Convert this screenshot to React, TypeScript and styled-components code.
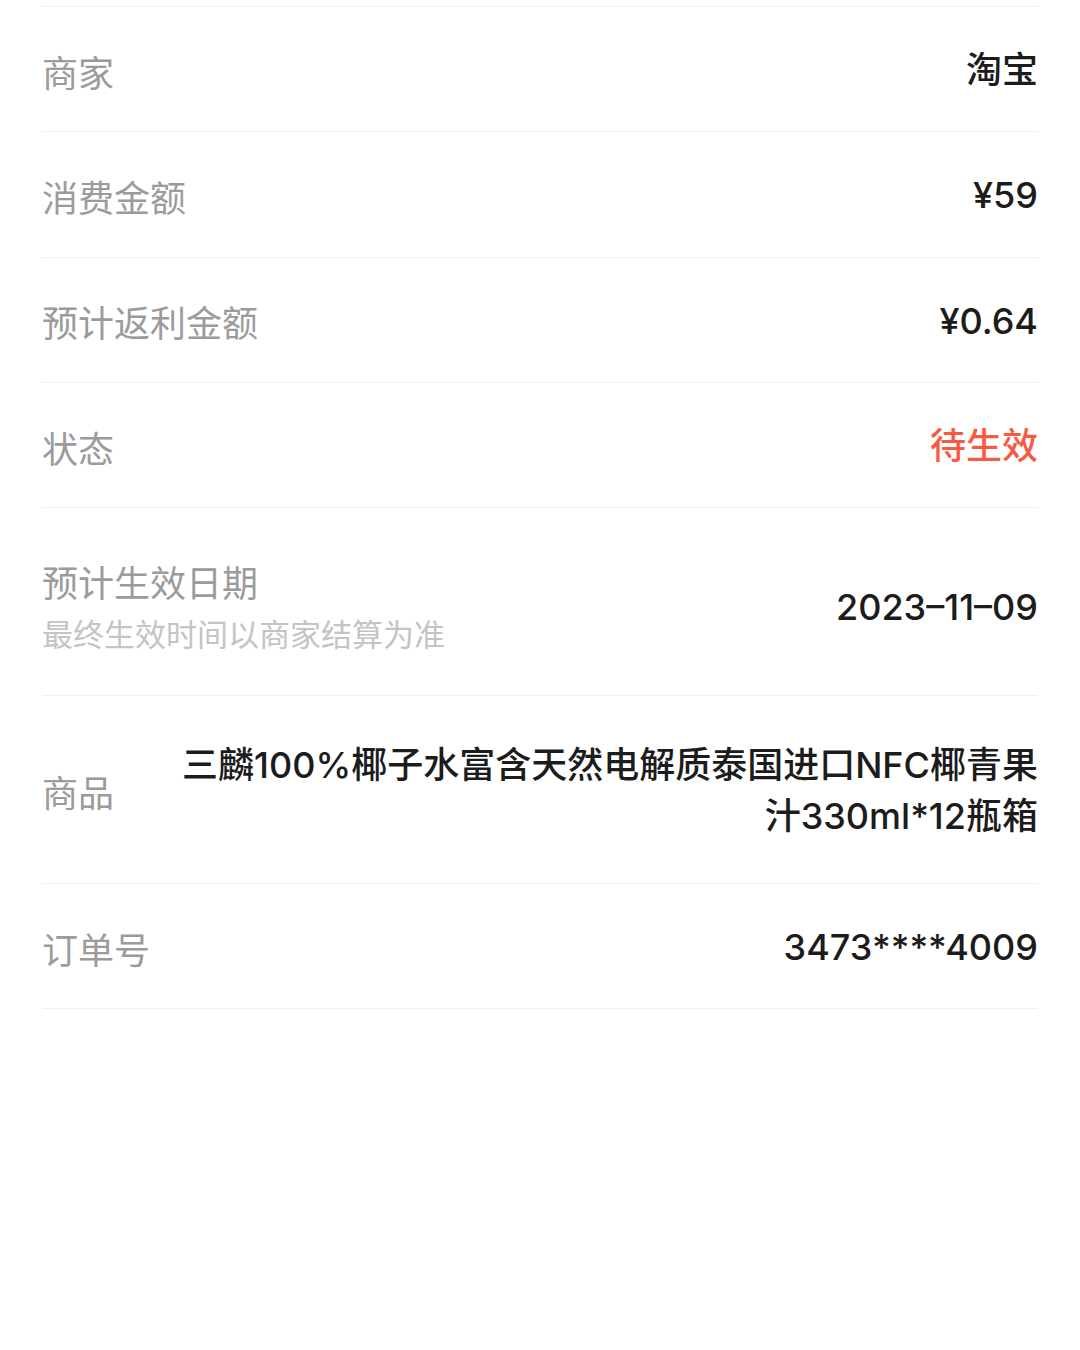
import React from "react";
import styled, { createGlobalStyle } from "styled-components";

const GlobalStyle = createGlobalStyle`
  html, body {
    margin: 0;
    padding: 0;
    background: #ffffff;
  }
  body {
    font-family: "Inter", "Noto Sans CJK SC", "Noto Sans", sans-serif;
    -webkit-font-smoothing: antialiased;
  }
`;

type DetailItem = {
  label: string;
  hint?: string;
  value: string;
  tone?: "normal" | "alert";
  tall?: boolean;
};

const items: DetailItem[] = [
  { label: "商家", value: "淘宝" },
  { label: "消费金额", value: "¥59" },
  { label: "预计返利金额", value: "¥0.64" },
  { label: "状态", value: "待生效", tone: "alert" },
  { label: "预计生效日期", hint: "最终生效时间以商家结算为准", value: "2023–11–09" },
  { label: "商品", value: "三麟100%椰子水富含天然电解质泰国进口NFC椰青果汁330ml*12瓶箱", tall: true },
  { label: "订单号", value: "3473****4009" },
];

const Page = styled.div`
  width: 1080px;
  min-height: 1350px;
  padding: 6px 42px 0;
  box-sizing: border-box;
  background: #ffffff;
`;

const List = styled.div`
  display: flex;
  flex-direction: column;
  border-top: 1px solid #f0f0f0;
`;

const Row = styled.div<{ $hasHint?: boolean; $tall?: boolean }>`
  display: flex;
  align-items: center;
  justify-content: space-between;
  box-sizing: border-box;
  min-height: 125.3px;
  padding: ${(p) => (p.$hasHint ? "47px 0 36px" : p.$tall ? "44px 0 41px" : "3px 0 0")};
  border-bottom: 1px solid #f0f0f0;
`;

const LabelBox = styled.div`
  display: flex;
  flex-direction: column;
  flex-shrink: 0;
`;

const Label = styled.div`
  font-family: "Noto Sans CJK SC", sans-serif;
  font-size: 36px;
  line-height: 52px;
  color: #9b9b9b;
  font-weight: 400;
`;

const Hint = styled.div`
  font-family: "Noto Sans CJK SC", sans-serif;
  font-size: 31px;
  line-height: 52px;
  color: #c4c4c4;
`;

const Value = styled.div<{ $tone?: "normal" | "alert" }>`
  flex: 1;
  margin-left: 60px;
  text-align: right;
  font-size: 36px;
  line-height: 51px;
  font-weight: 500;
  color: ${(p) => (p.$tone === "alert" ? "#f85a41" : "#1c1c1c")};
  word-break: break-all;
`;

export default function App() {
  return (
    <>
      <GlobalStyle />
      <Page>
        <List>
          {items.map((item) => (
            <Row key={item.label} $hasHint={!!item.hint} $tall={item.tall}>
              <LabelBox>
                <Label>{item.label}</Label>
                {item.hint && <Hint>{item.hint}</Hint>}
              </LabelBox>
              <Value $tone={item.tone}>{item.value}</Value>
            </Row>
          ))}
        </List>
      </Page>
    </>
  );
}
